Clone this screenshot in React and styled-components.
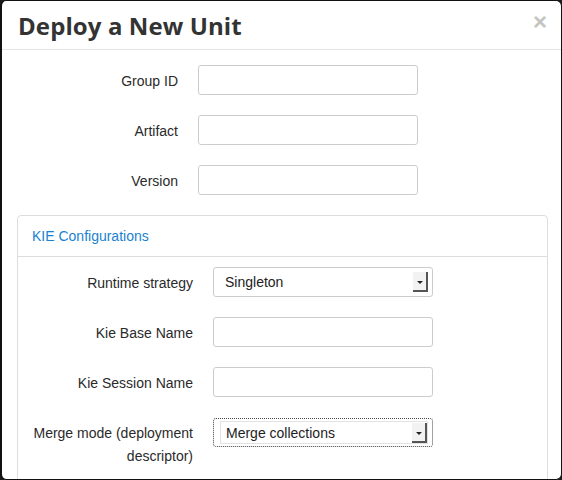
import React from 'react'
import styled, { createGlobalStyle } from 'styled-components'

const GlobalStyle = createGlobalStyle`
  html, body {
    margin: 0;
    padding: 0;
    background: #1b1b1b;
  }
  body {
    font-family: "Liberation Sans", Arial, sans-serif;
  }
`

const topFields = ['Group ID', 'Artifact', 'Version']

const App = () => {
  return (
    <>
      <GlobalStyle />
      <Modal>
        <Header>
          <Title>Deploy a New Unit</Title>
          <Close>×</Close>
        </Header>
        <Body>
          <Form>
            {topFields.map(label => (
              <Row key={label}>
                <Label>{label}</Label>
                <Input type="text" />
              </Row>
            ))}
          </Form>
          <Panel>
            <PanelHeading>KIE Configurations</PanelHeading>
            <PanelBody>
              <Row $inPanel>
                <Label>Runtime strategy</Label>
                <Select>
                  <SelectText>Singleton</SelectText>
                  <Arrow />
                </Select>
              </Row>
              <Row $inPanel>
                <Label>Kie Base Name</Label>
                <Input type="text" />
              </Row>
              <Row $inPanel>
                <Label>Kie Session Name</Label>
                <Input type="text" />
              </Row>
              <Row $inPanel>
                <Label>
                  Merge mode (deployment
                  <br />
                  descriptor)
                </Label>
                <FocusRing>
                  <InnerSelect>
                    <SelectText>Merge collections</SelectText>
                    <Arrow />
                  </InnerSelect>
                </FocusRing>
              </Row>
            </PanelBody>
          </Panel>
        </Body>
      </Modal>
    </>
  )
}

const Modal = styled.div`
  box-sizing: border-box;
  height: 480px;
  background: #fff;
  border: 1px solid #111;
  border-left-width: 2px;
  border-radius: 6px;
  overflow: hidden;
`
const Header = styled.div`
  display: flex;
  align-items: center;
  justify-content: space-between;
  height: 48px;
  padding: 0 14px 0 16px;
  border-bottom: 1px solid #e5e5e5;
`
const Title = styled.h4`
  margin: 0;
  font-family: "Open Sans", "Liberation Sans", sans-serif;
  font-size: 24px;
  font-weight: 700;
  color: #333;
  letter-spacing: 0.1px;
`
const Close = styled.span`
  font-family: "Liberation Sans", Arial, sans-serif;
  font-size: 24px;
  font-weight: 700;
  color: #c4c4c4;
  line-height: 1;
  margin-top: -6px;
`
const Body = styled.div`
  padding: 15px 13px 0 15px;
`
const Form = styled.div`
  display: flex;
  flex-direction: column;
  gap: 20px;
  margin-left: -15px;
`
const Row = styled.div`
  display: grid;
  grid-template-columns: ${p => (p.$inPanel ? '175px' : '176px')} 220px;
  column-gap: 20px;
  align-items: start;
`
const Label = styled.label`
  text-align: right;
  font-size: 14px;
  color: #2a2a2a;
  padding-top: 5px;
  line-height: 23px;
`
const Input = styled.input`
  box-sizing: border-box;
  width: 220px;
  height: 30px;
  border: 1px solid #ccc;
  border-radius: 3px;
  background: #fff;
  margin: 0;
`
const Panel = styled.div`
  margin-top: 20px;
  border: 1px solid #ddd;
  border-radius: 4px;
`
const PanelHeading = styled.div`
  height: 41px;
  box-sizing: border-box;
  padding: 12px 14px 0;
  font-size: 14px;
  color: #1a82d0;
  border-bottom: 1px solid #ddd;
`
const PanelBody = styled.div`
  display: flex;
  flex-direction: column;
  gap: 20px;
  padding: 10px 0 30px;
`
const Select = styled.div`
  box-sizing: border-box;
  width: 220px;
  height: 30px;
  display: flex;
  align-items: center;
  justify-content: space-between;
  padding: 0 4px 0 11px;
  border: 1px solid #ccc;
  border-radius: 3px;
  background: #fff;
`
const SelectText = styled.span`
  font-size: 14px;
  color: #222;
`
const Arrow = styled.span`
  position: relative;
  box-sizing: border-box;
  width: 15px;
  height: 20px;
  background: #f2f2f2;
  border-right: 2px solid #555;
  border-bottom: 2px solid #555;
  &::after {
    content: '';
    position: absolute;
    left: 4px;
    top: 9px;
    border-left: 3px solid transparent;
    border-right: 3px solid transparent;
    border-top: 3px solid #222;
  }
`
const FocusRing = styled.div`
  box-sizing: border-box;
  width: 220px;
  height: 29px;
  margin-top: 1px;
  padding: 2px 4px 2px 6px;
  border: 1px dotted #444;
  border-radius: 3px;
`
const InnerSelect = styled.div`
  box-sizing: border-box;
  height: 100%;
  display: flex;
  align-items: center;
  justify-content: space-between;
  padding-left: 5px;
  border: 1px solid #e2e2e2;
  background: #fff;
`

export default App
